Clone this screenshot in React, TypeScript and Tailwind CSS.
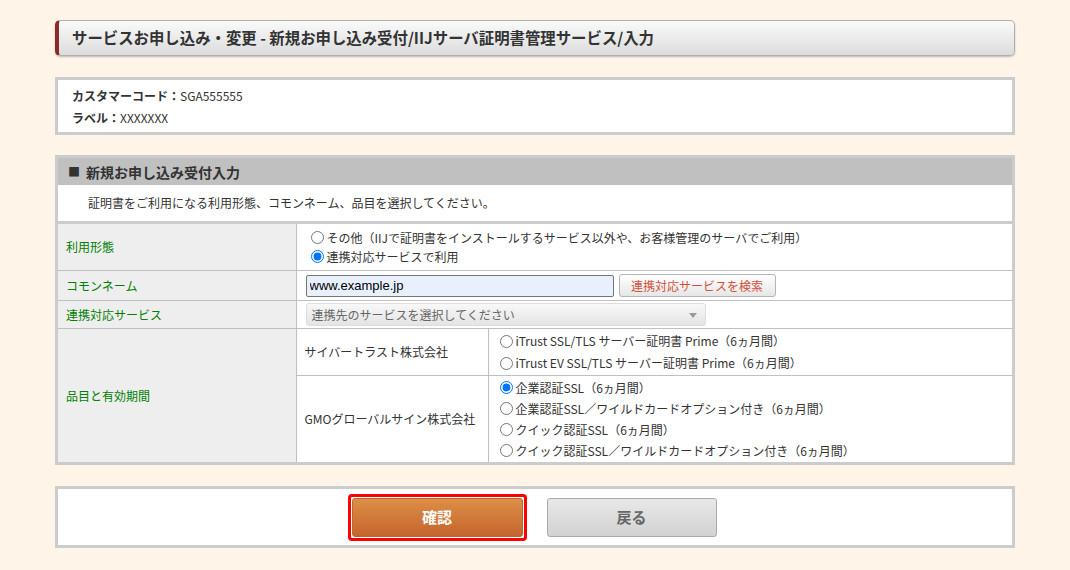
import React from "react";

const FONT = { fontFamily: '"Noto Sans CJK JP", "Noto Sans", sans-serif' };

function Radio({ checked, label }: { checked?: boolean; label: string }) {
  return (
    <label className="flex items-center">
      <input
        type="radio"
        defaultChecked={checked}
        className="mr-[3px] h-[13px] w-[13px]"
        name={label}
      />
      <span>{label}</span>
    </label>
  );
}

export default function App() {
  return (
    <div
      className="min-h-[570px] w-full bg-[#fff4e8] px-[55px] pt-[20px] pb-[20px] text-[12px] text-[#333]"
      style={FONT}
    >
      {/* Title bar */}
      <div className="flex h-[36px] items-center rounded-[5px] border border-[#b0b0b0] border-l-[4px] border-l-[#8a2a2a] bg-gradient-to-b from-[#fafafa] to-[#dcdcdc] pl-[13px] shadow-[0_1px_2px_rgba(0,0,0,0.25)]">
        <h1 className="text-[15.4px] font-bold leading-none text-[#333]">
          サービスお申し込み・変更 - 新規お申し込み受付/IIJサーバ証明書管理サービス/入力
        </h1>
      </div>

      {/* Customer box */}
      <div className="mt-[21px] border-[3px] border-[#cccccc] bg-white pt-[5px] pb-[3px] pl-[14px] leading-[22px]">
        <div>
          <span className="font-bold">カスタマーコード：</span>SGA555555
        </div>
        <div>
          <span className="font-bold">ラベル：</span>XXXXXXX
        </div>
      </div>

      {/* Form section */}
      <div className="mt-[20px] border-[3px] border-[#cccccc] bg-white">
        <div className="flex h-[27px] items-center bg-[#c0c0c0] pl-[10px] text-[14px] font-bold leading-none text-[#333]">
          <span className="mr-[6px] text-[12px]">■</span>新規お申し込み受付入力
        </div>
        <div className="flex h-[39px] items-center border-b-[3px] border-[#cccccc] pl-[30px] leading-none">
          証明書をご利用になる利用形態、コモンネーム、品目を選択してください。
        </div>
        <table className="w-full border-collapse border-hidden">
          <colgroup>
            <col className="w-[238px]" />
            <col className="w-[192px]" />
            <col />
          </colgroup>
          <tbody>
            <tr>
              <td className="border border-[#c0c0c0] bg-[#eeeeee] pl-[8px] align-middle text-[#008000]">
                利用形態
              </td>
              <td
                colSpan={2}
                className="border border-[#c0c0c0] py-[4px] pl-[14px] leading-[19px]"
              >
                <Radio label="その他（IIJで証明書をインストールするサービス以外や、お客様管理のサーバでご利用）" />
                <Radio checked label="連携対応サービスで利用" />
              </td>
            </tr>
            <tr>
              <td className="border border-[#c0c0c0] bg-[#eeeeee] pl-[8px] text-[#008000]">
                コモンネーム
              </td>
              <td colSpan={2} className="border border-[#c0c0c0] py-[3px] pl-[9px]">
                <div className="flex items-center">
                  <input
                    type="text"
                    defaultValue="www.example.jp"
                    className="h-[22px] w-[308px] rounded-[2px] border border-[#767676] bg-[#e8f0fe] px-[3px] text-[13px] text-black"
                    style={{ fontFamily: '"Liberation Sans", Arial, sans-serif' }}
                  />
                  <button className="ml-[5px] h-[23px] w-[157px] rounded-[3px] border border-[#b5b5b5] bg-gradient-to-b from-[#ffffff] to-[#e6e6e6] text-[12px] leading-none text-[#d4503a]">
                    連携対応サービスを検索
                  </button>
                </div>
              </td>
            </tr>
            <tr>
              <td className="border border-[#c0c0c0] bg-[#eeeeee] pl-[8px] text-[#008000]">
                連携対応サービス
              </td>
              <td colSpan={2} className="border border-[#c0c0c0] py-[2px] pl-[9px]">
                <div className="relative flex h-[23px] w-[400px] items-center rounded-[3px] border border-[#dddddd] bg-gradient-to-b from-[#f8f8f8] to-[#e4e4e4] pl-[5px] text-[#666]">
                  連携先のサービスを選択してください
                  <span className="absolute right-[8px] top-[9px] h-0 w-0 border-x-[4px] border-t-[5px] border-x-transparent border-t-[#999]" />
                </div>
              </td>
            </tr>
            <tr>
              <td
                rowSpan={2}
                className="border border-[#c0c0c0] bg-[#eeeeee] pl-[8px] text-[#008000]"
              >
                品目と有効期間
              </td>
              <td className="border border-[#c0c0c0] pl-[8px]">サイバートラスト株式会社</td>
              <td className="border border-[#c0c0c0] py-[1px] pl-[11px] leading-[22px]">
                <Radio label="iTrust SSL/TLS サーバー証明書 Prime（6ヵ月間）" />
                <Radio label="iTrust EV SSL/TLS サーバー証明書 Prime（6ヵ月間）" />
              </td>
            </tr>
            <tr>
              <td className="border border-[#c0c0c0] pl-[8px]">GMOグローバルサイン株式会社</td>
              <td className="border border-[#c0c0c0] py-[1px] pl-[11px] leading-[21px]">
                <Radio checked label="企業認証SSL（6ヵ月間）" />
                <Radio label="企業認証SSL／ワイルドカードオプション付き（6ヵ月間）" />
                <Radio label="クイック認証SSL（6ヵ月間）" />
                <Radio label="クイック認証SSL／ワイルドカードオプション付き（6ヵ月間）" />
              </td>
            </tr>
          </tbody>
        </table>
      </div>

      {/* Buttons */}
      <div className="mt-[21px] flex h-[62px] items-center justify-center border-[3px] border-[#cccccc] bg-white pr-[6px]">
        <div className="rounded-[4px] border-[3px] border-[#ff0000] p-[1px]">
          <button className="flex h-[39px] w-[171px] items-center justify-center rounded-[3px] border border-[#b86a2e] bg-gradient-to-b from-[#dc8e46] to-[#c5652d] text-[15px] font-bold text-white">
            確認
          </button>
        </div>
        <button className="ml-[20px] flex h-[39px] w-[170px] items-center justify-center rounded-[3px] border border-[#aaaaaa] bg-gradient-to-b from-[#e8e8e8] to-[#d2d2d2] text-[15px] font-bold text-[#666]">
          戻る
        </button>
      </div>
    </div>
  );
}
